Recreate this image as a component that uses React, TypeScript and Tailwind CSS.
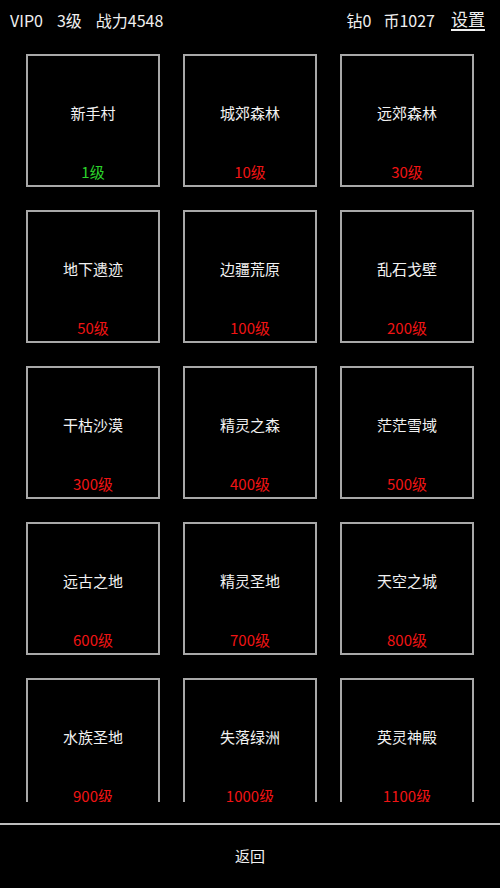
// Map select screen: header stats, 3-col grid of areas, back button footer.

const areas = [
  { name: "新手村", level: 1 },
  { name: "城郊森林", level: 10 },
  { name: "远郊森林", level: 30 },
  { name: "地下遗迹", level: 50 },
  { name: "边疆荒原", level: 100 },
  { name: "乱石戈壁", level: 200 },
  { name: "干枯沙漠", level: 300 },
  { name: "精灵之森", level: 400 },
  { name: "茫茫雪域", level: 500 },
  { name: "远古之地", level: 600 },
  { name: "精灵圣地", level: 700 },
  { name: "天空之城", level: 800 },
  { name: "水族圣地", level: 900 },
  { name: "失落绿洲", level: 1000 },
  { name: "英灵神殿", level: 1100 },
];

const PLAYER_LEVEL = 3;

function AreaCard({ name, level }: { name: string; level: number }) {
  const unlocked = level <= PLAYER_LEVEL;
  return (
    <div className="flex h-[133px] flex-col items-center border-2 border-[#a8a8a8] pt-[47px]">
      <span className="h-5 text-[15px] leading-5 text-[#f2f2f2]">{name}</span>
      <span
        className={`mt-[39px] h-5 text-[15px] leading-5 ${
          unlocked ? "text-[#2bd42b]" : "text-[#f01414]"
        }`}
      >
        {level}级
      </span>
    </div>
  );
}

export default function App() {
  return (
    <div
      className="flex h-[888px] w-[500px] flex-col bg-black text-[#f0f0f0]"
      style={{ fontFamily: '"Noto Sans CJK SC", "Noto Sans", sans-serif' }}
    >
      {/* header */}
      <div className="flex h-10 items-center justify-between pl-[10px] pr-[15px] text-[16px]">
        <div className="flex gap-[14px]">
          <span>VIP0</span>
          <span>3级</span>
          <span>战力4548</span>
        </div>
        <div className="flex items-center gap-3">
          <span>钻0</span>
          <span>币1027</span>
          <span className="ml-1 border-b-2 border-[#f0f0f0] text-[17px] leading-[20px]">
            设置
          </span>
        </div>
      </div>

      <div className="h-[762px] overflow-hidden px-[26px] pt-[14px]">
        <div className="grid grid-cols-3 gap-[23px]">
          {areas.map((a) => (
            <AreaCard key={a.name} {...a} />
          ))}
        </div>
      </div>

      <div className="h-[21px]" />

      {/* footer */}
      <div className="flex flex-1 items-center justify-center border-t-2 border-[#bdbdbd] text-[15px]">
        返回
      </div>
    </div>
  );
}
